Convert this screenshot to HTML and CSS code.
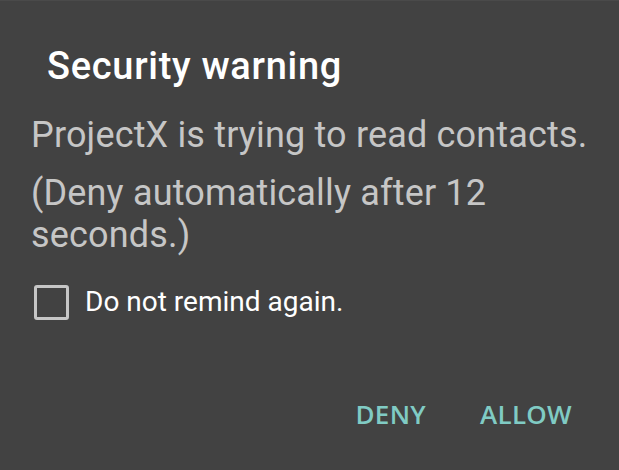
FILE: index.html
```html
<!DOCTYPE html>
<html>
<head>
<meta charset="utf-8">
<link rel="stylesheet" href="styles.css">
</head>
<body>
<div class="dialog">
  <h1 class="title">Security warning</h1>
  <p class="msg">ProjectX is trying to read contacts.</p>
  <p class="msg msg2">(Deny automatically after 12 seconds.)</p>
  <label class="check">
    <span class="box"></span>
    <span class="check-label">Do not remind again.</span>
  </label>
  <div class="actions">
    <span class="btn">DENY</span>
    <span class="btn">ALLOW</span>
  </div>
</div>
</body>
</html>
```

FILE: styles.css
```css
html, body {
  margin: 0;
  padding: 0;
  background: #424242;
}
.dialog {
  width: 619px;
  height: 470px;
  box-sizing: border-box;
  background: #424242;
  border-top: 1px solid #4a4a4a;
  padding: 42px 25px 0 31px;
  font-family: Roboto, "Liberation Sans", sans-serif;
}
.title {
  margin: 0 0 0 16px;
  font-size: 38px;
  font-weight: 500;
  letter-spacing: 0.7px;
  color: #ffffff;
  line-height: 46px;
}
.msg {
  margin: 25px 0 0 0;
  font-size: 36px;
  line-height: 42px;
  letter-spacing: 0.17px;
  color: #c6c6c6;
  font-weight: 400;
}
.msg2 {
  margin-top: 16px;
}
.check {
  display: flex;
  align-items: center;
  gap: 16px;
  margin-top: 28px;
  margin-left: 3px;
}
.box {
  width: 29px;
  height: 29px;
  border: 3px solid #c6c6c6;
  border-radius: 3px;
}
.check-label {
  font-size: 28px;
  line-height: 36px;
  color: #ffffff;
}
.actions {
  display: flex;
  justify-content: flex-end;
  gap: 54px;
  margin-top: 79px;
  padding-right: 22px;
}
.btn {
  font-family: "Open Sans", "Noto Sans", sans-serif;
  font-weight: 600;
  font-size: 26px;
  line-height: 30px;
  letter-spacing: 0.3px;
  color: #80cbc4;
}
```
